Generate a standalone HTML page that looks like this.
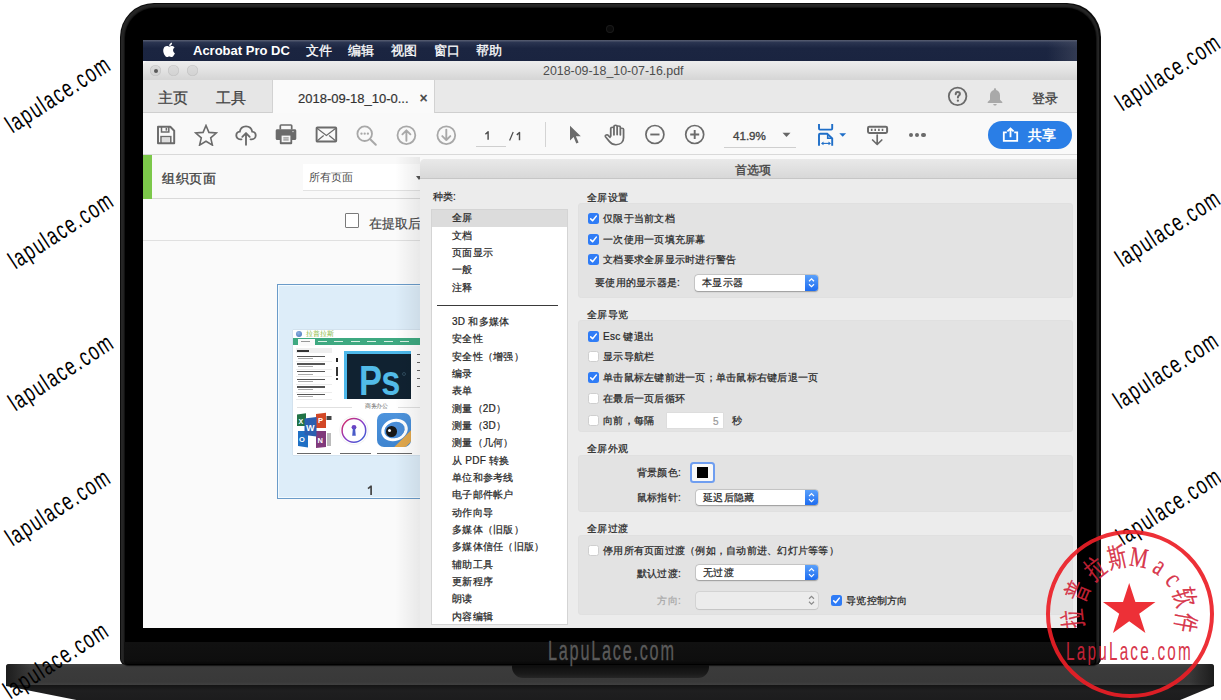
<!DOCTYPE html>
<html><head><meta charset="utf-8"><style>
*{box-sizing:border-box;margin:0;padding:0}
html,body{width:1221px;height:700px;overflow:hidden;background:#fff}
body{position:relative;font-family:"Liberation Sans",sans-serif;color:#333}
.a{position:absolute}
.t{position:absolute;white-space:nowrap;line-height:1}
.md{-webkit-text-stroke:0.25px currentColor}
.cb{position:absolute;width:11px;height:11px;border-radius:2.5px;background:#fff;border:1px solid #cfcfcf}
.cb.on{background:#2f7cf6;border:none}
.cb svg{position:absolute;left:0;top:0}
.grp{position:absolute;background:#e3e3e3;border-radius:4px;box-shadow:inset 0 0 0 1px #e0e0e0}
.pop{position:absolute;background:#fff;border-radius:3px;box-shadow:0 0 0 0.5px rgba(0,0,0,0.18),0 0.5px 1.5px rgba(0,0,0,0.25)}
.pop.dis{background:#ececec;box-shadow:0 0 0 0.5px rgba(0,0,0,0.12),0 0.5px 1px rgba(0,0,0,0.08)}
.step{position:absolute;background:linear-gradient(#5aa0fa,#1d6cf0);border-radius:0 3px 3px 0}
.step svg{position:absolute;left:0;top:0}
.wm{position:absolute;white-space:nowrap;line-height:1;color:#000;letter-spacing:2.2px}
</style></head><body>
<div class="a" style="left:6px;top:664px;width:1208px;height:21px;background:linear-gradient(#444 0%,#3b3b3b 20%,#393939 85%,#404040 100%);border-radius:3px 3px 0 0"></div>
<div class="a" style="left:6px;top:664px;width:25px;height:21px;background:linear-gradient(to right,#1c1c1c,rgba(60,60,60,0));border-radius:3px 0 0 0"></div>
<div class="a" style="left:1189px;top:664px;width:25px;height:21px;background:linear-gradient(to left,#1c1c1c,rgba(60,60,60,0));border-radius:0 3px 0 0"></div>
<div class="a" style="left:6px;top:684.5px;width:1208px;height:16px;background:linear-gradient(#141414,#1f1f20 35%,#1c1c1d);clip-path:polygon(0 0,100% 0,100% 1.5px,1173px 100%,73px 100%,0 1.5px)"></div>
<div class="a" style="left:512px;top:663.5px;width:197px;height:14px;background:linear-gradient(#0c0c0c,#1a1a1a 70%,#262626);border-radius:0 0 11px 11px"></div>
<div class="a" style="left:119.5px;top:3px;width:981px;height:662px;background:#0c0c0c;border-radius:34px 34px 6px 6px"></div>
<div class="a" style="left:120.7px;top:4.2px;width:978.6px;height:660px;background:#262626;border-radius:33px 33px 5px 5px"></div>
<div class="a" style="left:124.5px;top:7.5px;width:971px;height:657px;background:#000;border-radius:30px 30px 3px 3px;box-shadow:0 0 1.5px 1px #101010"></div>
<div class="a" style="left:124px;top:641.5px;width:971px;height:22.5px;background:linear-gradient(#111,#0e0e0e 85%,#080808);border-radius:0 0 3px 3px"></div>
<div class="t" style="left:548px;top:636.5px;font-size:27.5px;color:#5a5a5a;transform:scaleX(0.59);transform-origin:0 0;letter-spacing:3px;-webkit-text-stroke:0.35px #5a5a5a">LapuLace.com</div>
<div class="a" style="left:607px;top:26px;width:6px;height:6px;border-radius:50%;background:#0a0a0a;box-shadow:0 0 0 1px #1a1a1a"></div>
<div class="a" style="left:143px;top:40px;width:934px;height:588px;overflow:hidden;background:#fafafa">
<div class="a" style="left:-143px;top:-40px;width:1221px;height:700px">
<div class="a" style="left:143px;top:40px;width:934px;height:21px;background:linear-gradient(#5a6074,#2a3450 12%,#1b2541 40%,#1a2440)"></div>
<div class="a" style="left:1047px;top:40px;width:30px;height:21px;background:linear-gradient(to right,rgba(80,86,105,0),rgba(80,86,105,0.45))"></div>
<svg class="a" style="left:161.5px;top:41.6px" width="13.6" height="15.4" viewBox="0 0 15 17"><path fill="#fff" d="M12.2 9.1c0-2 1.6-2.9 1.7-3-0.9-1.4-2.4-1.6-2.9-1.6-1.2-0.1-2.4 0.7-3 0.7s-1.6-0.7-2.6-0.7C4 4.5 2.7 5.3 2 6.5 0.6 9 1.6 12.6 3 14.6c0.7 1 1.5 2 2.5 2 1 0 1.4-0.6 2.6-0.6s1.5 0.6 2.6 0.6c1.1 0 1.7-1 2.4-2 0.8-1.1 1.1-2.2 1.1-2.3 0 0-2-0.8-2-3.2zM10.3 3.2C10.8 2.5 11.2 1.6 11.1 0.7 10.3 0.7 9.3 1.2 8.8 1.900 8.300 2.4 7.9 3.4 8 4.300c0.9 0.1 1.8-0.4 2.3-1.1z"/></svg>
<div class="t" style="left:193px;top:43.8px;font-size:13px;color:#fff;font-weight:bold;">Acrobat Pro DC</div>
<div class="t" style="left:306px;top:43.6px;font-size:13px;color:#fff;font-weight:normal;-webkit-text-stroke:0.3px #fff">文件</div>
<div class="t" style="left:348px;top:43.6px;font-size:13px;color:#fff;font-weight:normal;-webkit-text-stroke:0.3px #fff">编辑</div>
<div class="t" style="left:391px;top:43.6px;font-size:13px;color:#fff;font-weight:normal;-webkit-text-stroke:0.3px #fff">视图</div>
<div class="t" style="left:434px;top:43.6px;font-size:13px;color:#fff;font-weight:normal;-webkit-text-stroke:0.3px #fff">窗口</div>
<div class="t" style="left:476px;top:43.6px;font-size:13px;color:#fff;font-weight:normal;-webkit-text-stroke:0.3px #fff">帮助</div>
<div class="a" style="left:143px;top:60.5px;width:934px;height:20px;background:linear-gradient(#ededed,#e2e2e2 50%,#d5d5d5);border-radius:5px 0 0 0;border-bottom:1px solid #bdbdbd"></div>
<div class="a" style="left:150.1px;top:65.4px;width:11px;height:11px;border-radius:50%;background:linear-gradient(#dcdcdc,#d2d2d2);box-shadow:inset 0 0 0 0.6px #c3c3c3"></div>
<div class="a" style="left:153.6px;top:68.9px;width:4px;height:4px;border-radius:50%;background:#5a5a5a"></div>
<div class="a" style="left:168.4px;top:65.4px;width:11px;height:11px;border-radius:50%;background:linear-gradient(#dcdcdc,#d2d2d2);box-shadow:inset 0 0 0 0.6px #c3c3c3"></div>
<div class="a" style="left:186.7px;top:65.4px;width:11px;height:11px;border-radius:50%;background:linear-gradient(#dcdcdc,#d2d2d2);box-shadow:inset 0 0 0 0.6px #c3c3c3"></div>
<div class="t" style="left:543px;top:65.4px;font-size:12.4px;color:#4d4d4d;font-weight:normal;">2018-09-18_10-07-16.pdf</div>
<div class="a" style="left:143px;top:80px;width:934px;height:33px;background:#e9e9e9;border-bottom:1px solid #cfcfcf"></div>
<div class="a" style="left:143px;top:80px;width:129px;height:33px;background:#e6e6e6;border-bottom:1px solid #cfcfcf"></div>
<div class="a" style="left:272px;top:80px;width:163px;height:34px;background:#fafafa;border-left:1px solid #d2d2d2;border-right:1px solid #d2d2d2"></div>
<div class="t" style="left:158px;top:90.2px;font-size:15px;color:#444;font-weight:normal;-webkit-text-stroke:0.3px #444">主页</div>
<div class="t" style="left:216px;top:90.2px;font-size:15px;color:#444;font-weight:normal;-webkit-text-stroke:0.3px #444">工具</div>
<div class="t" style="left:298px;top:91.7px;font-size:13px;color:#333;font-weight:normal;-webkit-text-stroke:0.2px #333">2018-09-18_10-0...</div>
<div class="t" style="left:419.5px;top:91.2px;font-size:14px;color:#444;font-weight:normal;-webkit-text-stroke:0.5px #444">×</div>
<svg class="a" style="left:947px;top:86px" width="22" height="22" viewBox="0 0 22 22"><circle cx="10.6" cy="10.35" r="8.8" fill="none" stroke="#6a6a6a" stroke-width="1.8"/><path d="M8.700 8.300c0-1.500 1-2.400 2.100-2.400s2.100 0.800 2.100 2.100c0 1.500-2 1.700-2 3.400" fill="none" stroke="#6a6a6a" stroke-width="2" stroke-linecap="round"/><circle cx="10.900" cy="14.700" r="1.150" fill="#6a6a6a"/></svg>
<svg class="a" style="left:987px;top:88px" width="16" height="18" viewBox="0 0 16 18"><path fill="#a9a9a9" d="M8 0.3c0.7 0 1.1 0.5 1.1 1.1v0.6C11.6 2.600 13 4.700 13 7.200v4.600l2.3 2.300v0.900H0.7v-0.900L3 11.800V7.200c0-2.500 1.400-4.600 3.900-5.200V1.400C6.900 0.800 7.300 0.300 8 0.300z M6.300 16h3.400c0 0.900-0.800 1.600-1.700 1.600S6.300 16.900 6.300 16z"/></svg>
<div class="t" style="left:1031.5px;top:91.5px;font-size:13.3px;color:#3e3e3e;font-weight:normal;-webkit-text-stroke:0.3px #3e3e3e">登录</div>
<div class="a" style="left:143px;top:113px;width:934px;height:42px;background:#f9f9f9;border-bottom:1px solid #d9d9d9"></div>
<svg class="a" style="left:156px;top:125px" width="20" height="20" viewBox="0 0 20 20"><path d="M2 1.8h12.3l3.9 3.9v12.5H2z" fill="none" stroke="#6b6b6b" stroke-width="1.95" stroke-linejoin="round"/><path d="M5.5 1.8v5.2h7.3V1.8" fill="none" stroke="#6b6b6b" stroke-width="1.5"/><rect x="9.6" y="3" width="1.6" height="2.6" fill="#6b6b6b"/><rect x="5" y="11.6" width="9.8" height="6.6" fill="none" stroke="#6b6b6b" stroke-width="1.5"/><rect x="6" y="12.6" width="7.8" height="4.6" fill="#ddd"/></svg>
<svg class="a" style="left:194px;top:124px" width="24" height="22" viewBox="0 0 24 22"><path d="M12 1.5l2.9 6.9 7.4 0.6-5.6 4.9 1.7 7.2L12 17.3l-6.4 3.8 1.7-7.2-5.6-4.9 7.4-0.6z" fill="none" stroke="#6b6b6b" stroke-width="1.6" stroke-linejoin="miter"/></svg>
<svg class="a" style="left:235px;top:125px" width="22" height="21" viewBox="0 0 22 21"><path d="M6.5 14.3H5.2C2.9 14.3 1.3 12.600 1.3 10.500c0-2 1.500-3.600 3.500-3.800C5.300 3.600 7.800 1.300 11 1.300c3.200 0 5.700 2.300 6.200 5.400 2 0.200 3.500 1.800 3.500 3.800 0 2.100-1.700 3.800-3.900 3.800h-1.300" fill="none" stroke="#6b6b6b" stroke-width="1.85" stroke-linecap="round"/><path d="M11 19.8V8.5M7.300 11.8L11 8.100l3.700 3.700" fill="none" stroke="#6b6b6b" stroke-width="1.85" stroke-linecap="round" stroke-linejoin="round"/></svg>
<svg class="a" style="left:275px;top:124px" width="22" height="21" viewBox="0 0 22 21"><path d="M5.3 5.5V1.800C5.300 1.300 5.700 1 6.100 1h9.800c0.400 0 0.800 0.300 0.800 0.800v3.700" fill="none" stroke="#6b6b6b" stroke-width="1.7"/><path d="M2.200 5.3h17.600c0.900 0 1.500 0.700 1.500 1.500v7.700c0 0.900-0.700 1.500-1.500 1.500h-2.600v3.300c0 0.500-0.400 0.900-0.900 0.900H5.700c-0.500 0-0.900-0.400-0.900-0.900v-3.300H2.200c-0.900 0-1.500-0.700-1.500-1.500V6.800c0-0.900 0.700-1.500 1.500-1.500z" fill="#6b6b6b"/><rect x="6.600" y="11.600" width="8.800" height="6.600" fill="#f4f4f4"/><rect x="8.300" y="13.500" width="5.400" height="0.9" fill="#6b6b6b"/><rect x="8.300" y="15.500" width="5.400" height="0.9" fill="#6b6b6b"/><circle cx="18" cy="7.600" r="0.700" fill="#eee"/></svg>
<svg class="a" style="left:315px;top:126px" width="23" height="17" viewBox="0 0 23 17"><rect x="1.6" y="1.5" width="19.600" height="14" rx="0.8" fill="none" stroke="#6b6b6b" stroke-width="1.9"/><path d="M2 2.2l9.400 7.300 9.400-7.300M2.300 14.800l6.400-5.300M20.500 14.800l-6.400-5.300" fill="none" stroke="#6b6b6b" stroke-width="1.2"/></svg>
<svg class="a" style="left:356px;top:125px" width="22" height="22" viewBox="0 0 22 22"><circle cx="8.700" cy="8.700" r="7.300" fill="none" stroke="#a8a8a8" stroke-width="1.8"/><path d="M14.200 14.200l5.600 5.600" stroke="#a8a8a8" stroke-width="2" stroke-linecap="round"/><circle cx="5.500" cy="8.700" r="1.150" fill="#a8a8a8"/><circle cx="8.700" cy="8.700" r="1.150" fill="#a8a8a8"/><circle cx="11.900" cy="8.700" r="1.150" fill="#a8a8a8"/></svg>
<svg class="a" style="left:396px;top:124.5px" width="21" height="21" viewBox="0 0 21 21"><circle cx="10.400" cy="10.200" r="8.900" fill="none" stroke="#a8a8a8" stroke-width="1.8"/><path d="M10.400 15.800V5.400M6.400 9.300l4-4 4 4" fill="none" stroke="#a8a8a8" stroke-width="1.9" stroke-linecap="round" stroke-linejoin="round"/></svg>
<svg class="a" style="left:436px;top:124.5px" width="21" height="21" viewBox="0 0 21 21"><circle cx="10.300" cy="10.200" r="8.900" fill="none" stroke="#a8a8a8" stroke-width="1.8"/><path d="M10.300 4.600v10.400M6.300 11.100l4 4 4-4" fill="none" stroke="#a8a8a8" stroke-width="1.9" stroke-linecap="round" stroke-linejoin="round"/></svg>
<svg class="a" style="left:480px;top:128px" width="45" height="16" viewBox="480 128 45 16"><path d="M485.4 134.2L488.1 131.8V139.7M516.8 134.9L519.5 132.5V140.2" fill="none" stroke="#4d4d4d" stroke-width="1.45" stroke-linejoin="round"/><path d="M509.6 140.4L513.2 132.1" stroke="#4a4a4a" stroke-width="1.2"/></svg>
<div class="a" style="left:476px;top:146px;width:30px;height:1px;background:#cfcfcf"></div>
<div class="a" style="left:545px;top:122px;width:1px;height:25px;background:#d4d4d4"></div>
<svg class="a" style="left:569px;top:124.5px" width="14" height="20" viewBox="0 0 14 20"><path d="M1 0.8v14.600l3.600-3.400 2.700 6.600 2.300-1-2.700-6.400h4.900z" fill="#6b6b6b"/></svg>
<svg class="a" style="left:602.5px;top:124px" width="24" height="22" viewBox="0 0 19.5 22" preserveAspectRatio="none"><path d="M6.300 12.300V4.600c0-0.800 0.600-1.400 1.300-1.400s1.300 0.600 1.300 1.400v6.300M8.900 10.900V2.600c0-0.800 0.600-1.400 1.300-1.400s1.300 0.600 1.300 1.400v8.200M11.500 10.800V3.300c0-0.800 0.600-1.400 1.300-1.400s1.300 0.600 1.300 1.400v7.600M14.100 10.900V5.500c0-0.800 0.600-1.400 1.300-1.400s1.300 0.600 1.300 1.400v8.300c0 4.300-2.600 6.900-6.200 6.900-2.500 0-4.100-1.300-5.300-3.200l-3.100-4.700c-0.400-0.700-0.200-1.500 0.500-1.800 0.600-0.300 1.300-0.100 1.700 0.500l1.400 1.900" fill="none" stroke="#6b6b6b" stroke-width="1.45" stroke-linecap="round" stroke-linejoin="round"/></svg>
<svg class="a" style="left:644px;top:124px" width="22" height="22" viewBox="0 0 22 22"><circle cx="10.900" cy="10.500" r="9" fill="none" stroke="#6b6b6b" stroke-width="1.7"/><path d="M6.300 10.500h9.200" stroke="#6b6b6b" stroke-width="1.9"/></svg>
<svg class="a" style="left:684px;top:124px" width="22" height="22" viewBox="0 0 22 22"><circle cx="10.700" cy="10.500" r="9" fill="none" stroke="#6b6b6b" stroke-width="1.7"/><path d="M6.200 10.500h9M10.700 6v9" stroke="#6b6b6b" stroke-width="1.9"/></svg>
<div class="t" style="left:733px;top:130.3px;font-size:11.6px;color:#444;font-weight:normal;-webkit-text-stroke:0.35px #444">41.9%</div>
<svg class="a" style="left:782.3px;top:132.3px" width="9" height="6" viewBox="0 0 9 6"><path d="M0.500 0.800h8L4.500 5z" fill="#666"/></svg>
<div class="a" style="left:724px;top:147px;width:72px;height:1px;background:#cfcfcf"></div>
<svg class="a" style="left:817px;top:123px" width="18" height="24" viewBox="0 0 18 24"><path d="M2 1.100V5.600Q2 6.600 3 6.600H14.200Q15.200 6.600 15.200 5.600V1.100" fill="none" stroke="#1e6ec8" stroke-width="1.9"/><path d="M2 22.700V11.800Q2 10.800 3 10.800H10.200L15.200 15.400V22.700" fill="none" stroke="#1e6ec8" stroke-width="1.9"/><path d="M10.700 11V15.200H15" fill="none" stroke="#1e6ec8" stroke-width="1.6"/><path d="M5.500 20.400H12.500" stroke="#1e6ec8" stroke-width="1.1"/><path d="M4 20.400L6.500 18.500V22.300Z M14 20.400L11.500 18.500V22.300Z" fill="#1e6ec8"/></svg>
<svg class="a" style="left:838.5px;top:133px" width="8" height="5" viewBox="0 0 8 5"><path d="M0.300 0.200h6.800L3.700 3.700z" fill="#1e6ec8"/></svg>
<svg class="a" style="left:866px;top:124px" width="23" height="22" viewBox="0 0 23 22"><rect x="2" y="2.700" width="19.100" height="6.200" rx="1.300" fill="none" stroke="#6b6b6b" stroke-width="2"/><path d="M5.700 4.700v2.200M9.200 4.700v2.200M12.900 4.700v2.200M16.500 4.700v2.200" stroke="#6b6b6b" stroke-width="1.600"/><path d="M11.200 11V20.300M6.600 16L11.200 20.500 15.800 16" fill="none" stroke="#6b6b6b" stroke-width="1.7" stroke-linecap="round" stroke-linejoin="round"/></svg>
<div class="a" style="left:908.5px;top:132.6px;width:4.4px;height:4.4px;border-radius:50%;background:#6b6b6b"></div>
<div class="a" style="left:915.0px;top:132.6px;width:4.4px;height:4.4px;border-radius:50%;background:#6b6b6b"></div>
<div class="a" style="left:921.4px;top:132.6px;width:4.4px;height:4.4px;border-radius:50%;background:#6b6b6b"></div>
<div class="a" style="left:987.5px;top:120.5px;width:84px;height:28.6px;border-radius:14.3px;background:#2a7ee6"></div>
<svg class="a" style="left:1002px;top:126.5px" width="17" height="15" viewBox="0 0 17 15"><path d="M4.800 5.400H1.800v8.500h13.400V5.400h-3" fill="none" stroke="#fff" stroke-width="1.8"/><path d="M8.500 10.300V1.500M5.400 4.400l3.100-3 3.100 3" fill="none" stroke="#fff" stroke-width="1.8"/></svg>
<div class="t" style="left:1027.5px;top:129.4px;font-size:13.5px;color:#fff;font-weight:bold;">共享</div>
<div class="a" style="left:143px;top:155px;width:934px;height:44px;background:#f9f9f9;border-bottom:1px solid #d9d9d9"></div>
<div class="a" style="left:143px;top:155px;width:9px;height:44px;background:#7cc84a"></div>
<div class="t" style="left:162px;top:172.2px;font-size:13px;color:#444;font-weight:normal;letter-spacing:0.5px;-webkit-text-stroke:0.35px #444">组织页面</div>
<div class="a" style="left:303px;top:164px;width:130px;height:26px;background:#fff;box-shadow:0 1px 0 #e2e2e2"></div>
<div class="t" style="left:309px;top:172.1px;font-size:11px;color:#4a4a4a;font-weight:normal;">所有页面</div>
<svg class="a" style="left:416px;top:176px" width="6" height="4" viewBox="0 0 6 4"><path d="M0 0h6L3 4z" fill="#555"/></svg>
<div class="a" style="left:143px;top:199px;width:934px;height:42px;background:#fafafa;border-bottom:1px solid #e0e0e0"></div>
<div class="a" style="left:344.5px;top:213px;width:14.5px;height:14.5px;border:1px solid #7a7a7a;background:#fff;border-radius:1px"></div>
<div class="t" style="left:369px;top:216.7px;font-size:13px;color:#454545;font-weight:normal;-webkit-text-stroke:0.2px #454545">在提取后</div>
<div class="a" style="left:277.3px;top:284px;width:170px;height:215.4px;background:#ddedf9;border:1.7px solid #6a9bc9;box-shadow:inset 0 0 0 1px #f2faff"></div>
<svg class="a" style="left:364px;top:483px" width="12" height="14" viewBox="364 483 12 14"><path d="M368 488.6L371.1 486.2V494.9" fill="none" stroke="#444" stroke-width="1.7" stroke-linejoin="round"/></svg>
<div class="a" style="left:292.7px;top:329.8px;width:130px;height:125px;background:#fff;box-shadow:0 0 1px rgba(0,0,0,0.25)"></div>
<div class="a" style="left:296.4px;top:331.4px;width:6px;height:6px;border-radius:50%;background:radial-gradient(circle at 40% 35%,#8fb3e0,#3f6db5)"></div>
<div class="t" style="left:306px;top:330.5px;font-size:7px;color:#86b83a;font-family:'Liberation Serif',serif">拉普拉斯</div>
<div class="a" style="left:293px;top:338px;width:130px;height:7px;background:#3ea981"></div>
<div class="a" style="left:298px;top:338.7px;width:16.5px;height:7.5px;background:#fafafa"></div>
<div class="a" style="left:301px;top:341px;width:9px;height:1.4px;background:#999"></div>
<div class="a" style="left:317.5px;top:340.8px;width:9px;height:1.6px;background:#d8f0e4"></div>
<div class="a" style="left:334.0px;top:340.8px;width:9px;height:1.6px;background:#d8f0e4"></div>
<div class="a" style="left:350.5px;top:340.8px;width:9px;height:1.6px;background:#d8f0e4"></div>
<div class="a" style="left:367.0px;top:340.8px;width:9px;height:1.6px;background:#d8f0e4"></div>
<div class="a" style="left:383.5px;top:340.8px;width:9px;height:1.6px;background:#d8f0e4"></div>
<div class="a" style="left:400.0px;top:340.8px;width:9px;height:1.6px;background:#d8f0e4"></div>
<div class="a" style="left:296px;top:348px;width:36px;height:5px;background:#efefef"></div>
<div class="a" style="left:297px;top:350px;width:12px;height:1.5px;background:#333"></div>
<div class="a" style="left:297px;top:355.8px;width:28px;height:1.3px;background:#555"></div>
<div class="a" style="left:298px;top:358.2px;width:15px;height:0.9px;background:#aaa"></div>
<div class="a" style="left:296px;top:361.0px;width:36px;height:0.6px;background:#ececec"></div>
<div class="a" style="left:297px;top:363.4px;width:28px;height:1.3px;background:#555"></div>
<div class="a" style="left:298px;top:365.8px;width:15px;height:0.9px;background:#aaa"></div>
<div class="a" style="left:296px;top:368.6px;width:36px;height:0.6px;background:#ececec"></div>
<div class="a" style="left:297px;top:371.1px;width:28px;height:1.3px;background:#555"></div>
<div class="a" style="left:298px;top:373.5px;width:15px;height:0.9px;background:#aaa"></div>
<div class="a" style="left:296px;top:376.3px;width:36px;height:0.6px;background:#ececec"></div>
<div class="a" style="left:297px;top:378.8px;width:28px;height:1.3px;background:#555"></div>
<div class="a" style="left:298px;top:381.1px;width:15px;height:0.9px;background:#aaa"></div>
<div class="a" style="left:296px;top:383.9px;width:36px;height:0.6px;background:#ececec"></div>
<div class="a" style="left:297px;top:386.4px;width:28px;height:1.3px;background:#555"></div>
<div class="a" style="left:298px;top:388.8px;width:15px;height:0.9px;background:#aaa"></div>
<div class="a" style="left:296px;top:391.6px;width:36px;height:0.6px;background:#ececec"></div>
<div class="a" style="left:297px;top:394.1px;width:28px;height:1.3px;background:#555"></div>
<div class="a" style="left:298px;top:396.4px;width:15px;height:0.9px;background:#aaa"></div>
<div class="a" style="left:296px;top:399.2px;width:36px;height:0.6px;background:#ececec"></div>
<div class="a" style="left:336px;top:358px;width:1.5px;height:4px;background:#222"></div>
<div class="a" style="left:336px;top:367px;width:1.5px;height:9px;background:#333"></div>
<div class="a" style="left:336px;top:378px;width:1.5px;height:2px;background:#333"></div>
<div class="a" style="left:344px;top:350.5px;width:67px;height:48.5px;background:#102231;border-top:3px solid #4db8ea;border-left:3.5px solid #4db8ea"></div>
<div class="t" style="left:359px;top:358.5px;font-size:43px;line-height:1;color:#52bbe8;font-weight:bold;transform:scaleX(0.8);transform-origin:0 0;letter-spacing:-1px">Ps</div>
<div class="a" style="left:402px;top:372px;width:4px;height:4px;border-radius:50%;border:0.8px solid #2e4a5c"></div>
<div class="a" style="left:416.5px;top:354px;width:3px;height:1.2px;background:#666"></div>
<div class="a" style="left:416.5px;top:362px;width:3px;height:1.2px;background:#666"></div>
<div class="a" style="left:416.5px;top:370px;width:3px;height:1.2px;background:#666"></div>
<div class="a" style="left:416.5px;top:378px;width:3px;height:1.2px;background:#666"></div>
<div class="a" style="left:416.5px;top:386px;width:3px;height:1.2px;background:#666"></div>
<div class="a" style="left:296.5px;top:407.2px;width:55px;height:0.7px;background:#e0e0e0"></div>
<div class="a" style="left:398px;top:407.2px;width:25px;height:0.7px;background:#e0e0e0"></div>
<div class="t" style="left:365px;top:404.2px;font-size:5.5px;color:#666;letter-spacing:-0.3px">商务办公</div>
<svg class="a" style="left:296px;top:412px" width="37" height="37" viewBox="296 412 37 37"><path d="M297 414.5L306 413.2V426H297Z" fill="#217346"/><path d="M316 414L326 412.8V428H316Z" fill="#d24726"/><path d="M298 431H308V447.5L298 446Z" fill="#1f6fc4"/><path d="M316 431H326V447L316 448Z" fill="#80397b"/><path d="M304.5 418.5L316.5 417V436.5L304.5 435Z" fill="#2b5eb0"/><rect x="326.5" y="416" width="5" height="4" fill="#444"/><rect x="327" y="433" width="4" height="13" fill="#bbb"/><text x="298.5" y="423.5" font-size="7" font-weight="bold" fill="#fff" font-family="Liberation Sans">X</text><text x="306" y="431" font-size="9" font-weight="bold" fill="#fff" font-family="Liberation Sans">W</text><text x="318" y="423" font-size="7.5" font-weight="bold" fill="#fff" font-family="Liberation Sans">P</text><text x="299" y="442" font-size="7.5" font-weight="bold" fill="#fff" font-family="Liberation Sans">O</text><text x="317.5" y="443" font-size="7.5" font-weight="bold" fill="#fff" font-family="Liberation Sans">N</text></svg>
<svg class="a" style="left:338px;top:414px" width="33" height="33" viewBox="338 414 33 33"><defs><linearGradient id="kg" x1="0" y1="0" x2="1" y2="1"><stop offset="0" stop-color="#e02a5a"/><stop offset="0.5" stop-color="#8a3cc8"/><stop offset="1" stop-color="#2f64d6"/></linearGradient></defs><circle cx="353.9" cy="430.4" r="14.3" fill="#fff" stroke="#efefef" stroke-width="0.8"/><circle cx="353.9" cy="430.4" r="11.8" fill="none" stroke="url(#kg)" stroke-width="1.5"/><circle cx="354" cy="427.3" r="2.4" fill="#6a44c4"/><path d="M352.9 428.5L352.2 435.8H355.8L355.1 428.5Z" fill="#4a5cc8"/></svg>
<div class="a" style="left:377.3px;top:413.3px;width:34.2px;height:34.2px;border-radius:7px;overflow:hidden;background:linear-gradient(#4d93dc,#3f85d0)"><div class="a" style="left:4px;top:6px;width:27px;height:22px;border-radius:50%;border:3px solid #fff;transform:rotate(-20deg)"></div><div class="a" style="left:7.5px;top:10px;width:19px;height:15px;border-radius:50%;background:#4a8cd6"></div><div class="a" style="left:9px;top:13px;width:10.5px;height:10.5px;border-radius:50%;background:#161616"></div><div class="a" style="left:10.5px;top:16px;width:3px;height:3px;border-radius:50%;background:#fff"></div><div class="a" style="left:12px;top:24.5px;width:32px;height:8px;background:#e0a74c;transform:rotate(-45deg)"></div></div>
<div class="a" style="left:297px;top:452.5px;width:34px;height:1.1px;background:#6a6a6a"></div>
<div class="a" style="left:340px;top:452.5px;width:31px;height:1.1px;background:#6a6a6a"></div>
<div class="a" style="left:377px;top:452.5px;width:35px;height:1.1px;background:#6a6a6a"></div>
<div class="a" style="left:395px;top:157px;width:25px;height:480px;background:linear-gradient(to right,rgba(0,0,0,0),rgba(0,0,0,0.07))"></div>
<div class="a" style="left:420px;top:158.5px;width:700px;height:520px;background:#ececec;border-radius:5px 0 0 0"></div>
<div class="a" style="left:420px;top:158.5px;width:700px;height:20.5px;background:linear-gradient(#e9e9e9,#d8d8d8);border-radius:5px 0 0 0;border-bottom:1px solid #c6c6c6"></div>
<div class="t" style="left:735px;top:163.6px;font-size:12px;color:#444;font-weight:normal;-webkit-text-stroke:0.35px #444">首选项</div>
<div class="t" style="left:432.5px;top:192.3px;font-size:10px;color:#262626;font-weight:normal;letter-spacing:0.25px;-webkit-text-stroke:0.22px #262626">种类:</div>
<div class="a" style="left:431px;top:209px;width:137px;height:416px;background:#fff;box-shadow:inset 0 0 0 1px #d4d4d4"></div>
<div class="a" style="left:432px;top:210px;width:135px;height:16.5px;background:#dcdcdc"></div>
<div class="a" style="left:437px;top:305px;width:121px;height:1px;background:#3a3a3a"></div>
<div class="t" style="left:452px;top:213.3px;font-size:10px;color:#262626;font-weight:normal;letter-spacing:0.25px;-webkit-text-stroke:0.22px #262626">全屏</div>
<div class="t" style="left:452px;top:230.6px;font-size:10px;color:#262626;font-weight:normal;letter-spacing:0.25px;-webkit-text-stroke:0.22px #262626">文档</div>
<div class="t" style="left:452px;top:247.9px;font-size:10px;color:#262626;font-weight:normal;letter-spacing:0.25px;-webkit-text-stroke:0.22px #262626">页面显示</div>
<div class="t" style="left:452px;top:265.3px;font-size:10px;color:#262626;font-weight:normal;letter-spacing:0.25px;-webkit-text-stroke:0.22px #262626">一般</div>
<div class="t" style="left:452px;top:282.6px;font-size:10px;color:#262626;font-weight:normal;letter-spacing:0.25px;-webkit-text-stroke:0.22px #262626">注释</div>
<div class="t" style="left:452px;top:317.1px;font-size:10px;color:#262626;font-weight:normal;letter-spacing:0.25px;-webkit-text-stroke:0.22px #262626">3D 和多媒体</div>
<div class="t" style="left:452px;top:334.4px;font-size:10px;color:#262626;font-weight:normal;letter-spacing:0.25px;-webkit-text-stroke:0.22px #262626">安全性</div>
<div class="t" style="left:452px;top:351.7px;font-size:10px;color:#262626;font-weight:normal;letter-spacing:0.25px;-webkit-text-stroke:0.22px #262626">安全性（增强）</div>
<div class="t" style="left:452px;top:369.1px;font-size:10px;color:#262626;font-weight:normal;letter-spacing:0.25px;-webkit-text-stroke:0.22px #262626">编录</div>
<div class="t" style="left:452px;top:386.4px;font-size:10px;color:#262626;font-weight:normal;letter-spacing:0.25px;-webkit-text-stroke:0.22px #262626">表单</div>
<div class="t" style="left:452px;top:403.7px;font-size:10px;color:#262626;font-weight:normal;letter-spacing:0.25px;-webkit-text-stroke:0.22px #262626">测量（2D）</div>
<div class="t" style="left:452px;top:421.0px;font-size:10px;color:#262626;font-weight:normal;letter-spacing:0.25px;-webkit-text-stroke:0.22px #262626">测量（3D）</div>
<div class="t" style="left:452px;top:438.3px;font-size:10px;color:#262626;font-weight:normal;letter-spacing:0.25px;-webkit-text-stroke:0.22px #262626">测量（几何）</div>
<div class="t" style="left:452px;top:455.7px;font-size:10px;color:#262626;font-weight:normal;letter-spacing:0.25px;-webkit-text-stroke:0.22px #262626">从 PDF 转换</div>
<div class="t" style="left:452px;top:473.0px;font-size:10px;color:#262626;font-weight:normal;letter-spacing:0.25px;-webkit-text-stroke:0.22px #262626">单位和参考线</div>
<div class="t" style="left:452px;top:490.3px;font-size:10px;color:#262626;font-weight:normal;letter-spacing:0.25px;-webkit-text-stroke:0.22px #262626">电子邮件帐户</div>
<div class="t" style="left:452px;top:507.6px;font-size:10px;color:#262626;font-weight:normal;letter-spacing:0.25px;-webkit-text-stroke:0.22px #262626">动作向导</div>
<div class="t" style="left:452px;top:524.9px;font-size:10px;color:#262626;font-weight:normal;letter-spacing:0.25px;-webkit-text-stroke:0.22px #262626">多媒体（旧版）</div>
<div class="t" style="left:452px;top:542.3px;font-size:10px;color:#262626;font-weight:normal;letter-spacing:0.25px;-webkit-text-stroke:0.22px #262626">多媒体信任（旧版）</div>
<div class="t" style="left:452px;top:559.6px;font-size:10px;color:#262626;font-weight:normal;letter-spacing:0.25px;-webkit-text-stroke:0.22px #262626">辅助工具</div>
<div class="t" style="left:452px;top:576.9px;font-size:10px;color:#262626;font-weight:normal;letter-spacing:0.25px;-webkit-text-stroke:0.22px #262626">更新程序</div>
<div class="t" style="left:452px;top:594.2px;font-size:10px;color:#262626;font-weight:normal;letter-spacing:0.25px;-webkit-text-stroke:0.22px #262626">朗读</div>
<div class="t" style="left:452px;top:611.5px;font-size:10px;color:#262626;font-weight:normal;letter-spacing:0.25px;-webkit-text-stroke:0.22px #262626">内容编辑</div>
<div class="t" style="left:587px;top:192.5px;font-size:10px;color:#262626;font-weight:normal;letter-spacing:0.25px;-webkit-text-stroke:0.22px #262626">全屏设置</div>
<div class="t" style="left:587px;top:310.0px;font-size:10px;color:#262626;font-weight:normal;letter-spacing:0.25px;-webkit-text-stroke:0.22px #262626">全屏导览</div>
<div class="t" style="left:587px;top:444.3px;font-size:10px;color:#262626;font-weight:normal;letter-spacing:0.25px;-webkit-text-stroke:0.22px #262626">全屏外观</div>
<div class="t" style="left:587px;top:524.3px;font-size:10px;color:#262626;font-weight:normal;letter-spacing:0.25px;-webkit-text-stroke:0.22px #262626">全屏过渡</div>
<div class="grp" style="left:577.5px;top:203px;width:495px;height:94.5px"></div>
<div class="grp" style="left:577.5px;top:320px;width:495px;height:112.0px"></div>
<div class="grp" style="left:577.5px;top:455px;width:495px;height:56.6px"></div>
<div class="grp" style="left:577.5px;top:535px;width:495px;height:80.0px"></div>
<div class="cb on" style="left:587.5px;top:213.0px"><svg width="11" height="11" viewBox="0 0 11 11"><path d="M2.700 5.900L4.600 7.800 8.300 3.100" fill="none" stroke="#fff" stroke-width="1.5" stroke-linecap="round" stroke-linejoin="round"/></svg></div>
<div class="t" style="left:603px;top:214.0px;font-size:10px;color:#262626;font-weight:normal;letter-spacing:0.25px;-webkit-text-stroke:0.22px #262626">仅限于当前文档</div>
<div class="cb on" style="left:587.5px;top:233.6px"><svg width="11" height="11" viewBox="0 0 11 11"><path d="M2.700 5.900L4.600 7.800 8.300 3.100" fill="none" stroke="#fff" stroke-width="1.5" stroke-linecap="round" stroke-linejoin="round"/></svg></div>
<div class="t" style="left:603px;top:234.6px;font-size:10px;color:#262626;font-weight:normal;letter-spacing:0.25px;-webkit-text-stroke:0.22px #262626">一次使用一页填充屏幕</div>
<div class="cb on" style="left:587.5px;top:254.2px"><svg width="11" height="11" viewBox="0 0 11 11"><path d="M2.700 5.900L4.600 7.800 8.300 3.100" fill="none" stroke="#fff" stroke-width="1.5" stroke-linecap="round" stroke-linejoin="round"/></svg></div>
<div class="t" style="left:603px;top:255.2px;font-size:10px;color:#262626;font-weight:normal;letter-spacing:0.25px;-webkit-text-stroke:0.22px #262626">文档要求全屏显示时进行警告</div>
<div class="t" style="left:595px;top:278.1px;font-size:10px;color:#262626;font-weight:normal;letter-spacing:0.25px;-webkit-text-stroke:0.22px #262626">要使用的显示器是:</div>
<div class="pop" style="left:695px;top:275px;width:123px;height:15.5px"></div>
<div class="step" style="left:805px;top:275px;width:13px;height:15.5px"><svg width="13" height="15.5" viewBox="0 0 13 15.5"><path d="M4 6.25L6.500 3.75L9 6.25M4 9.25L6.500 11.75L9 9.25" fill="none" stroke="#fff" stroke-width="1.2"/></svg></div>
<div class="t" style="left:702px;top:278.2px;font-size:10px;color:#262626;font-weight:normal;letter-spacing:0.25px;-webkit-text-stroke:0.22px #262626">本显示器</div>
<div class="cb on" style="left:587.5px;top:330.5px"><svg width="11" height="11" viewBox="0 0 11 11"><path d="M2.700 5.900L4.600 7.800 8.300 3.100" fill="none" stroke="#fff" stroke-width="1.5" stroke-linecap="round" stroke-linejoin="round"/></svg></div>
<div class="t" style="left:603px;top:331.5px;font-size:10px;color:#262626;font-weight:normal;letter-spacing:0.25px;-webkit-text-stroke:0.22px #262626">Esc 键退出</div>
<div class="cb" style="left:587.5px;top:351.1px"></div>
<div class="t" style="left:603px;top:352.1px;font-size:10px;color:#262626;font-weight:normal;letter-spacing:0.25px;-webkit-text-stroke:0.22px #262626">显示导航栏</div>
<div class="cb on" style="left:587.5px;top:371.7px"><svg width="11" height="11" viewBox="0 0 11 11"><path d="M2.700 5.900L4.600 7.800 8.300 3.100" fill="none" stroke="#fff" stroke-width="1.5" stroke-linecap="round" stroke-linejoin="round"/></svg></div>
<div class="t" style="left:603px;top:372.7px;font-size:10px;color:#262626;font-weight:normal;letter-spacing:0.25px;-webkit-text-stroke:0.22px #262626">单击鼠标左键前进一页；单击鼠标右键后退一页</div>
<div class="cb" style="left:587.5px;top:392.9px"></div>
<div class="t" style="left:603px;top:393.9px;font-size:10px;color:#262626;font-weight:normal;letter-spacing:0.25px;-webkit-text-stroke:0.22px #262626">在最后一页后循环</div>
<div class="cb" style="left:587.5px;top:414.5px"></div>
<div class="t" style="left:603px;top:415.5px;font-size:10px;color:#262626;font-weight:normal;letter-spacing:0.25px;-webkit-text-stroke:0.22px #262626">向前，每隔</div>
<div class="a" style="left:667px;top:413px;width:56px;height:15px;background:#fff;box-shadow:0 0 0 0.5px #d8d8d8"></div>
<div class="t" style="left:713px;top:416.5px;font-size:10px;color:#9a9a9a;font-weight:normal;letter-spacing:0.25px;-webkit-text-stroke:0.22px #9a9a9a">5</div>
<div class="t" style="left:732px;top:415.5px;font-size:10px;color:#262626;font-weight:normal;letter-spacing:0.25px;-webkit-text-stroke:0.22px #262626">秒</div>
<div class="t" style="right:540px;top:467.9px;font-size:10px;color:#262626;font-weight:normal;letter-spacing:0.25px;-webkit-text-stroke:0.22px #262626">背景颜色:</div>
<div class="a" style="left:690px;top:462px;width:25px;height:21px;background:#f8f8f8;border:2.5px solid #6f9ef0;border-radius:3.5px"></div>
<div class="a" style="left:697px;top:466.5px;width:11px;height:11px;background:#000"></div>
<div class="t" style="right:540px;top:493.3px;font-size:10px;color:#262626;font-weight:normal;letter-spacing:0.25px;-webkit-text-stroke:0.22px #262626">鼠标指针:</div>
<div class="pop" style="left:696px;top:490px;width:122px;height:15.300000000000011px"></div>
<div class="step" style="left:805px;top:490px;width:13px;height:15.300000000000011px"><svg width="13" height="15.300000000000011" viewBox="0 0 13 15.300000000000011"><path d="M4 6.15L6.500 3.65L9 6.15M4 9.15L6.500 11.65L9 9.15" fill="none" stroke="#fff" stroke-width="1.2"/></svg></div>
<div class="t" style="left:703px;top:493.1px;font-size:10px;color:#262626;font-weight:normal;letter-spacing:0.25px;-webkit-text-stroke:0.22px #262626">延迟后隐藏</div>
<div class="cb" style="left:587.8px;top:544.8px"></div>
<div class="t" style="left:603px;top:545.8px;font-size:10px;color:#262626;font-weight:normal;letter-spacing:0.25px;-webkit-text-stroke:0.22px #262626">停用所有页面过渡（例如，自动前进、幻灯片等等）</div>
<div class="t" style="right:540px;top:568.5px;font-size:10px;color:#262626;font-weight:normal;letter-spacing:0.25px;-webkit-text-stroke:0.22px #262626">默认过渡:</div>
<div class="pop" style="left:696px;top:565.2px;width:122px;height:15.299999999999955px"></div>
<div class="step" style="left:805px;top:565.2px;width:13px;height:15.299999999999955px"><svg width="13" height="15.299999999999955" viewBox="0 0 13 15.299999999999955"><path d="M4 6.15L6.500 3.65L9 6.15M4 9.15L6.500 11.65L9 9.15" fill="none" stroke="#fff" stroke-width="1.2"/></svg></div>
<div class="t" style="left:703px;top:568.4px;font-size:10px;color:#262626;font-weight:normal;letter-spacing:0.25px;-webkit-text-stroke:0.22px #262626">无过渡</div>
<div class="t" style="right:540px;top:596.0px;font-size:10px;color:#a8a8a8;font-weight:normal;letter-spacing:0.25px;-webkit-text-stroke:0.22px #a8a8a8">方向:</div>
<div class="pop dis" style="left:696px;top:592px;width:122px;height:16.5px"></div>
<svg class="a" style="left:805px;top:592px" width="13" height="16.5" viewBox="0 0 13 16.5"><path d="M4 6.75L6.500 4.25L9 6.75M4 9.75L6.500 12.25L9 9.75" fill="none" stroke="#8a8a8a" stroke-width="1.1"/></svg>
<div class="cb on" style="left:831px;top:595.0px"><svg width="11" height="11" viewBox="0 0 11 11"><path d="M2.700 5.900L4.600 7.800 8.300 3.100" fill="none" stroke="#fff" stroke-width="1.5" stroke-linecap="round" stroke-linejoin="round"/></svg></div>
<div class="t" style="left:846px;top:596.0px;font-size:10px;color:#262626;font-weight:normal;letter-spacing:0.25px;-webkit-text-stroke:0.22px #262626">导览控制方向</div>
</div></div>
<div class="wm" style="left:12px;top:113.0px;font-size:25px;transform-origin:0 80%;transform:rotate(-33deg) scaleX(0.69)">lapulace.com</div>
<div class="wm" style="left:15px;top:249.0px;font-size:25px;transform-origin:0 80%;transform:rotate(-33deg) scaleX(0.69)">lapulace.com</div>
<div class="wm" style="left:15px;top:391.0px;font-size:25px;transform-origin:0 80%;transform:rotate(-33deg) scaleX(0.69)">lapulace.com</div>
<div class="wm" style="left:12px;top:526.0px;font-size:25px;transform-origin:0 80%;transform:rotate(-33deg) scaleX(0.69)">lapulace.com</div>
<div class="wm" style="left:10px;top:679.0px;font-size:25px;transform-origin:0 80%;transform:rotate(-33deg) scaleX(0.69)">lapulace.com</div>
<div class="wm" style="left:1122px;top:91.0px;font-size:25px;transform-origin:0 80%;transform:rotate(-33deg) scaleX(0.69)">lapulace.com</div>
<div class="wm" style="left:1122px;top:247.0px;font-size:25px;transform-origin:0 80%;transform:rotate(-33deg) scaleX(0.69)">lapulace.com</div>
<div class="wm" style="left:1120px;top:389.0px;font-size:25px;transform-origin:0 80%;transform:rotate(-33deg) scaleX(0.69)">lapulace.com</div>
<div class="wm" style="left:1123px;top:525.0px;font-size:25px;transform-origin:0 80%;transform:rotate(-33deg) scaleX(0.69)">lapulace.com</div>
<div class="a" style="left:1045.5px;top:529.5px;width:168px;height:168px;border-radius:50%;border:4.2px solid rgba(235,30,38,0.92)"></div>
<svg class="a" style="left:1040px;top:520px" width="181" height="180" viewBox="0 0 181 180"><polygon points="89.20,63.00 95.40,82.07 115.45,82.07 99.23,93.86 105.42,112.93 89.20,101.14 72.98,112.93 79.17,93.86 62.95,82.07 83.00,82.07" fill="rgba(235,30,38,0.92)"/></svg>
<div class="t" style="left:1058.3px;top:604.4px;width:30px;height:30px;line-height:30px;text-align:center;font-family:'Liberation Serif',serif;font-size:26px;color:rgba(212,36,58,0.92);-webkit-text-stroke:0.35px rgba(212,36,58,0.92);transform:rotate(-96deg) scaleX(0.72)">拉</div>
<div class="t" style="left:1062.5px;top:576.4px;width:30px;height:30px;line-height:30px;text-align:center;font-family:'Liberation Serif',serif;font-size:26px;color:rgba(212,36,58,0.92);-webkit-text-stroke:0.35px rgba(212,36,58,0.92);transform:rotate(-67deg) scaleX(0.72)">普</div>
<div class="t" style="left:1079.7px;top:554.0px;width:30px;height:30px;line-height:30px;text-align:center;font-family:'Liberation Serif',serif;font-size:26px;color:rgba(212,36,58,0.92);-webkit-text-stroke:0.35px rgba(212,36,58,0.92);transform:rotate(-38deg) scaleX(0.72)">拉</div>
<div class="t" style="left:1101.8px;top:543.4px;width:30px;height:30px;line-height:30px;text-align:center;font-family:'Liberation Serif',serif;font-size:26px;color:rgba(212,36,58,0.92);-webkit-text-stroke:0.35px rgba(212,36,58,0.92);transform:rotate(-13deg) scaleX(0.72)">斯</div>
<div class="t" style="left:1124.3px;top:542.9px;width:30px;height:30px;line-height:30px;text-align:center;font-family:'Liberation Serif',serif;font-size:28px;color:rgba(212,36,58,0.92);-webkit-text-stroke:0.35px rgba(212,36,58,0.92);transform:rotate(10deg) scaleX(0.72)">M</div>
<div class="t" style="left:1145.3px;top:551.1px;width:30px;height:30px;line-height:30px;text-align:center;font-family:'Liberation Serif',serif;font-size:28px;color:rgba(212,36,58,0.92);-webkit-text-stroke:0.35px rgba(212,36,58,0.92);transform:rotate(33deg) scaleX(0.72)">a</div>
<div class="t" style="left:1159.0px;top:563.7px;width:30px;height:30px;line-height:30px;text-align:center;font-family:'Liberation Serif',serif;font-size:28px;color:rgba(212,36,58,0.92);-webkit-text-stroke:0.35px rgba(212,36,58,0.92);transform:rotate(52deg) scaleX(0.72)">c</div>
<div class="t" style="left:1168.8px;top:582.9px;width:30px;height:30px;line-height:30px;text-align:center;font-family:'Liberation Serif',serif;font-size:26px;color:rgba(212,36,58,0.92);-webkit-text-stroke:0.35px rgba(212,36,58,0.92);transform:rotate(74deg) scaleX(0.72)">软</div>
<div class="t" style="left:1170.1px;top:608.3px;width:30px;height:30px;line-height:30px;text-align:center;font-family:'Liberation Serif',serif;font-size:26px;color:rgba(212,36,58,0.92);-webkit-text-stroke:0.35px rgba(212,36,58,0.92);transform:rotate(100deg) scaleX(0.72)">件</div>
<div class="t" style="left:1066px;top:638.5px;font-size:25.5px;color:rgba(212,36,58,0.92);transform:scaleX(0.6);transform-origin:0 0;letter-spacing:3.7px;-webkit-text-stroke:0.2px rgba(212,36,58,0.92)">LapuLace.com</div>
</body></html>
